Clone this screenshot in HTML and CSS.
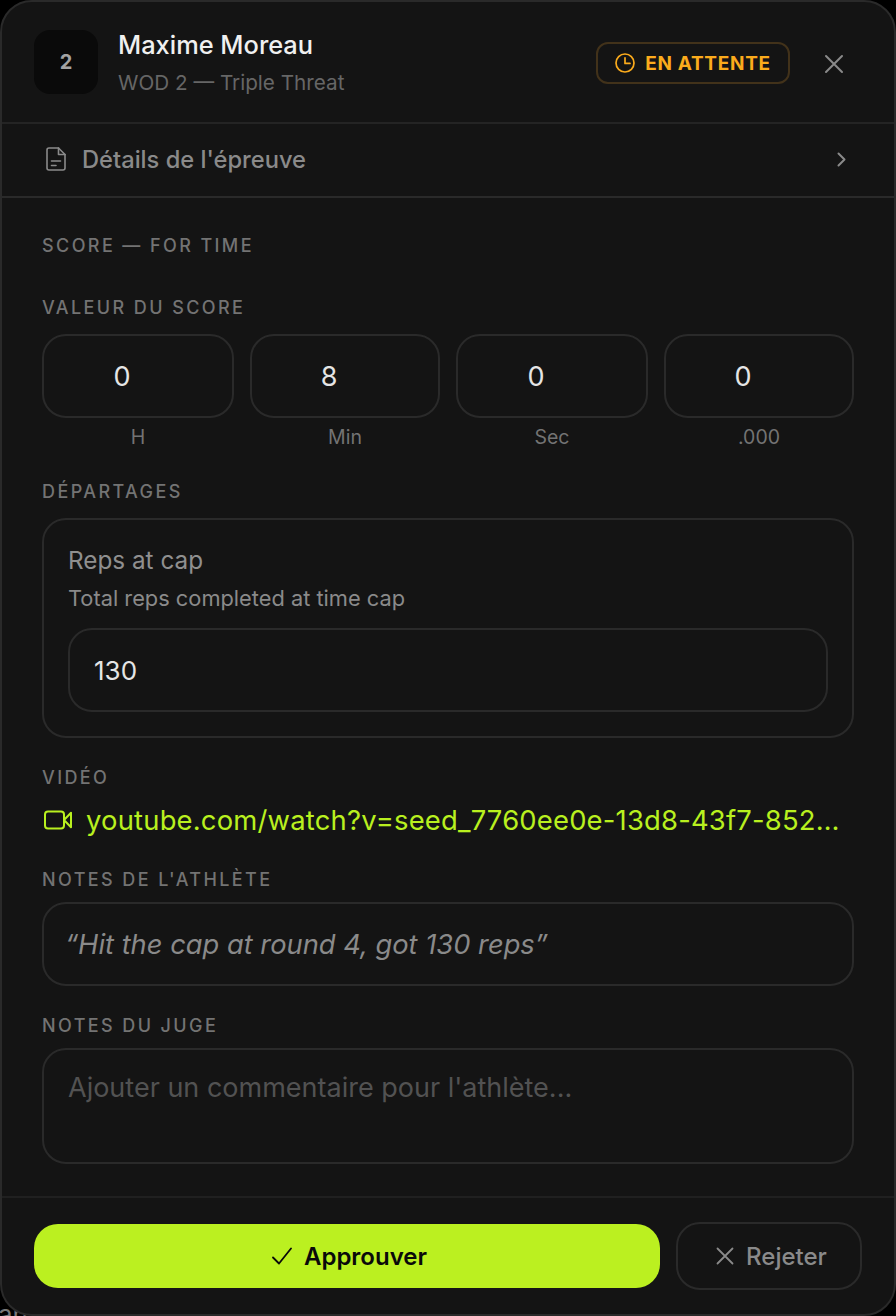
FILE: index.html
```html
<!DOCTYPE html>
<html lang="fr">
<head>
    <meta charset="UTF-8">
    <meta name="viewport" content="width=device-width, initial-scale=1.0">
    <title>Validation du score</title>
    <link rel="stylesheet" href="styles.css">
</head>
<body>
    <div class="behind">an</div>
    <div class="modal">
        <header class="modal-head">
            <div class="rank">2</div>
            <div class="athlete">
                <div class="athlete-name">Maxime Moreau</div>
                <div class="athlete-wod">WOD 2 — Triple Threat</div>
            </div>
            <div class="badge">
                <svg width="20" height="20" viewBox="0 0 20 20" fill="none" stroke="currentColor" stroke-width="1.7" stroke-linecap="round" stroke-linejoin="round"><circle cx="10" cy="10" r="9"/><path d="M10 4.800V10.400H15"/></svg>
                EN ATTENTE
            </div>
            <button class="close" aria-label="Fermer">
                <svg width="20" height="20" viewBox="0 0 20 20" fill="none" stroke="currentColor" stroke-width="2" stroke-linecap="round"><path d="M2 2L18 18M18 2L2 18"/></svg>
            </button>
        </header>

        <div class="details">
            <svg width="20" height="24" viewBox="0 0 20 24" fill="none" stroke="currentColor" stroke-width="1.600" stroke-linecap="round" stroke-linejoin="round"><path d="M12.500 1H3A2 2 0 0 0 1 3V21A2 2 0 0 0 3 23H17A2 2 0 0 0 19 21V7.500Z"/><path d="M12.500 1V7.500H19"/><path d="M5.500 14H14.500M5.500 18.500H10"/></svg>
            <span>Détails de l'épreuve</span>
            <svg class="chevron" width="9" height="15" viewBox="0 0 9 15" fill="none" stroke="currentColor" stroke-width="2" stroke-linecap="round" stroke-linejoin="round"><path d="M1.500 1.500L7.500 7.500L1.500 13.500"/></svg>
        </div>

        <main class="modal-body">
            <div class="label score-title">SCORE — FOR TIME</div>

            <div class="label">VALEUR DU SCORE</div>
            <div class="time-grid">
                <div class="time-col"><input class="field time-input" type="text" value="0"><span>H</span></div>
                <div class="time-col"><input class="field time-input" type="text" value="8"><span>Min</span></div>
                <div class="time-col"><input class="field time-input" type="text" value="0"><span>Sec</span></div>
                <div class="time-col"><input class="field time-input" type="text" value="0"><span>.000</span></div>
            </div>

            <div class="label">DÉPARTAGES</div>
            <div class="tiebreak">
                <div class="tiebreak-name">Reps at cap</div>
                <div class="tiebreak-desc">Total reps completed at time cap</div>
                <input class="field reps-input" type="text" value="130">
            </div>

            <div class="label">VIDÉO</div>
            <a class="video" href="#">
                <svg width="28" height="20" viewBox="0 0 28 20" fill="none" stroke="currentColor" stroke-width="2" stroke-linecap="round" stroke-linejoin="round"><rect x="1" y="1.500" width="19" height="17" rx="3"/><path d="M20 10L27 2.800V17.200Z"/></svg>
                <span>youtube.com/watch?v=seed_7760ee0e-13d8-43f7-8525-7d3b0c1a9e44</span>
            </a>

            <div class="label label-tight">NOTES DE L'ATHLÈTE</div>
            <div class="athlete-note">“Hit the cap at round 4, got 130 reps”</div>

            <div class="label label-tight">NOTES DU JUGE</div>
            <textarea class="field judge-note" placeholder="Ajouter un commentaire pour l'athlète..."></textarea>
        </main>

        <footer class="modal-foot">
            <button class="btn-approve">
                <svg width="20" height="18" viewBox="0 0 20 18" fill="none" stroke="currentColor" stroke-width="1.800" stroke-linecap="round" stroke-linejoin="round"><path d="M1 10.500L7 16.500L19 1.500"/></svg>
                Approuver
            </button>
            <button class="btn-reject">
                <svg width="18" height="18" viewBox="0 0 18 18" fill="none" stroke="currentColor" stroke-width="1.800" stroke-linecap="round"><path d="M1.500 1.500L16.500 16.500M16.500 1.500L1.500 16.500"/></svg>
                Rejeter
            </button>
        </footer>
    </div>
</body>
</html>
```

FILE: styles.css
```css
* {
    box-sizing: border-box;
}
html, body {
    margin: 0;
    height: 1316px;
    overflow: hidden;
    background: #000;
}
body {
    font-family: 'Inter', 'Lato', sans-serif;
    position: relative;
}
.behind {
    position: absolute;
    left: -2px;
    bottom: -14px;
    font-size: 26px;
    color: #777;
}
.modal {
    position: relative;
    width: 896px;
    height: 1316px;
    background: #141414;
    border: 2px solid #2a2a2a;
    border-radius: 32px;
    display: flex;
    flex-direction: column;
}
.modal-head {
    height: 122px;
    flex: none;
    display: flex;
    align-items: center;
    padding: 0 32px;
    border-bottom: 2px solid #242424;
}
.rank {
    width: 64px;
    height: 64px;
    border-radius: 16px;
    background: #0a0a0a;
    color: #a3a3a3;
    font-size: 20px;
    font-weight: 700;
    display: flex;
    align-items: center;
    justify-content: center;
}
.athlete {
    flex: 1;
    margin-left: 20px;
    margin-top: 2px;
}
.athlete-name {
    color: #f0f0f0;
    font-size: 25.4px;
    font-weight: 500;
    line-height: 32px;
}
.athlete-wod {
    color: #666;
    font-size: 20.7px;
    line-height: 28px;
    margin-top: 8px;
}
.badge {
    width: 194px;
    height: 42px;
    margin-top: 2px;
    border: 2px solid #42321a;
    border-radius: 12px;
    color: #fbab1c;
    font-size: 19px;
    font-weight: 700;
    letter-spacing: 0.7px;
    display: flex;
    align-items: center;
    justify-content: center;
    gap: 10px;
}
.close {
    background: none;
    border: none;
    padding: 0;
    margin-left: 34px;
    margin-right: 18px;
    margin-top: 4px;
    color: #8a8a8a;
    display: flex;
}
.details {
    height: 74px;
    flex: none;
    display: flex;
    align-items: center;
    padding: 0 48px 2px 44px;
    gap: 16px;
    color: #8a8a8a;
    font-size: 23.7px;
    font-weight: 500;
    border-bottom: 2px solid #2a2a2a;
}
.chevron {
    margin-left: auto;
}
.modal-body {
    flex: 1;
    padding: 37px 40px 0;
}
.label {
    color: #737373;
    font-size: 18px;
    font-weight: 500;
    letter-spacing: 2.4px;
    line-height: 22px;
    margin-bottom: 15px;
}
.score-title {
    margin-bottom: 40px;
}
.label-tight {
    margin-bottom: 11px;
}
.field {
    display: block;
    width: 100%;
    background: transparent;
    border: 2px solid #2a2a2a;
    border-radius: 24px;
    color: #e5e5e5;
    font-family: inherit;
    font-size: 26px;
    outline: 0;
}
.time-grid {
    display: grid;
    grid-template-columns: 192px 190px 192px 190px;
    gap: 16px;
    margin-bottom: 33px;
}
.time-col {
    text-align: center;
    color: #737373;
    font-size: 19.5px;
    line-height: 22px;
}
.time-input {
    height: 84px;
    text-align: center;
    padding: 0 32px 0 0;
    margin-bottom: 8px;
    font-size: 27px;
}
.tiebreak {
    border: 2px solid #2a2a2a;
    border-radius: 24px;
    height: 220px;
    padding: 24px 24px;
    margin-bottom: 29px;
}
.tiebreak-name {
    color: #8f8f8f;
    font-size: 24.3px;
    line-height: 32px;
}
.tiebreak-desc {
    color: #8a8a8a;
    font-size: 21.8px;
    line-height: 28px;
    margin-top: 8px;
    margin-bottom: 16px;
}
.reps-input {
    height: 84px;
    padding: 0 24px;
}
.video {
    display: flex;
    align-items: center;
    gap: 14px;
    color: #b9f01f;
    text-decoration: none;
    font-size: 27.4px;
    letter-spacing: 0.2px;
    line-height: 36px;
    margin-top: -2px;
    margin-bottom: 31px;
    padding: 0 12px 0 2px;
}
.video svg {
    flex: none;
}
.video span {
    overflow: hidden;
    white-space: nowrap;
    text-overflow: ellipsis;
}
.athlete-note {
    height: 84px;
    border: 2px solid #2a2a2a;
    border-radius: 24px;
    padding: 0 21px;
    display: flex;
    align-items: center;
    color: #8a8a8a;
    font-size: 27.3px;
    font-style: italic;
    margin-bottom: 29px;
}
.judge-note {
    height: 116px;
    padding: 21px 24px;
    resize: none;
    font-size: 27px;
}
.judge-note::placeholder {
    color: #525252;
}
.modal-foot {
    height: 118px;
    flex: none;
    display: flex;
    align-items: center;
    padding: 0 32px;
    gap: 16px;
    border-top: 2px solid #202020;
}
.btn-approve, .btn-reject {
    display: flex;
    align-items: center;
    justify-content: center;
    gap: 12px;
    padding: 0 0 0 5px;
    font-family: inherit;
    font-size: 24px;
    font-weight: 600;
}
.btn-approve {
    width: 626px;
    height: 64px;
    border: none;
    border-radius: 24px;
    background: #bbf020;
    color: #0a0a0a;
}
.btn-reject {
    width: 186px;
    height: 68px;
    background: transparent;
    border: 2px solid #2a2a2a;
    border-radius: 24px;
    color: #8a8a8a;
    font-weight: 500;
}
```
